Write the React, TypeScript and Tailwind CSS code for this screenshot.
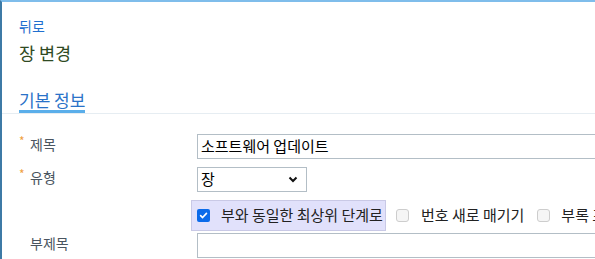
import React from "react";

const font = { fontFamily: '"Noto Sans CJK KR", "Noto Sans", sans-serif' };

function Check({ checked }: { checked?: boolean }) {
  if (checked) {
    return (
      <span className="inline-flex h-[13px] w-[13px] shrink-0 items-center justify-center rounded-[2px] bg-[#0b6bea]">
        <svg width="9" height="9" viewBox="0 0 10 10">
          <path d="M1.8 5.2 L4 7.3 L8.3 2.6" fill="none" stroke="white" strokeWidth="1.8" strokeLinecap="round" strokeLinejoin="round" />
        </svg>
      </span>
    );
  }
  return <span className="inline-block h-[13px] w-[13px] shrink-0 rounded-[3px] border border-[#cdcdcd] bg-[#f5f5f5]" />;
}

export default function App() {
  return (
    <div
      className="h-[259px] w-[595px] overflow-hidden border-l-2 border-t-2 border-l-[#3d7aa6] border-t-[#7fbdeb] bg-white"
      style={font}
    >
      <div className="pl-[17px] pt-[15px]">
        <div className="text-[14px] leading-[18px] text-[#1f6fcf]">뒤로</div>
        <div className="mt-[7px] text-[17.5px] leading-[22px] text-[#2f4a23]">장 변경</div>
      </div>
      <div className="mt-[24px] border-b border-[#e6edf2]">
        <div className="ml-[17px] inline-block border-b-[3px] border-[#5aaeea] pb-[0px] text-[17px] leading-[21px] text-[#2a72c8]">
          기본 정보
        </div>
      </div>
      <div className="mt-[20px] flex flex-col">
        <div className="flex items-start">
          <div className="flex w-[195px] shrink-0 pl-[17px] pt-[0px] text-[14px] text-[#4a5560]">
            <span className="w-[11px] text-[#f0a040] text-[12px] leading-[14px]">*</span>
            <span className="leading-[20px]">제목</span>
          </div>
          <div className="flex h-[25px] w-[420px] shrink-0 items-center border border-[#b3bec6] px-[3px] text-[15px] text-black">
            소프트웨어 업데이트
          </div>
        </div>
        <div className="mt-[8px] flex items-start">
          <div className="flex w-[195px] shrink-0 pl-[17px] pt-[0px] text-[14px] text-[#4a5560]">
            <span className="w-[11px] text-[#f0a040] text-[12px] leading-[14px]">*</span>
            <span className="leading-[20px]">유형</span>
          </div>
          <div className="flex h-[25px] w-[110px] items-center justify-between border border-[#b3bec6] pl-[3px] pr-[8px] text-[15px] text-black">
            <span>장</span>
            <svg width="10" height="7" viewBox="0 0 10 7">
              <path d="M1.5 1.5 L5 5 L8.5 1.5" fill="none" stroke="#111" strokeWidth="2" />
            </svg>
          </div>
        </div>
        <div className="mt-[8px] flex items-center">
          <div className="w-[189px] shrink-0" />
          <div className="flex h-[31px] w-[195px] shrink-0 items-center gap-[11px] border border-[#c9c9e6] bg-[#e1e1fb] pl-[5px] text-[15px] text-[#222]">
            <Check checked />
            <span className="whitespace-nowrap">부와 동일한 최상위 단계로</span>
          </div>
          <div className="ml-[10px] flex shrink-0 items-center gap-[12px] text-[15px] text-[#222]">
            <Check />
            <span className="whitespace-nowrap">번호 새로 매기기</span>
          </div>
          <div className="ml-[13px] flex shrink-0 items-center gap-[11px] whitespace-nowrap text-[15px] text-[#222]">
            <Check />
            <span>부록 포함</span>
          </div>
        </div>
        <div className="mt-[2px] flex items-start">
          <div className="w-[195px] shrink-0 pl-[28px] pt-[0px] text-[14px] leading-[20px] text-[#4a5560]">부제목</div>
          <div className="h-[25px] w-[420px] shrink-0 border border-[#b3bec6]" />
        </div>
      </div>
    </div>
  );
}
